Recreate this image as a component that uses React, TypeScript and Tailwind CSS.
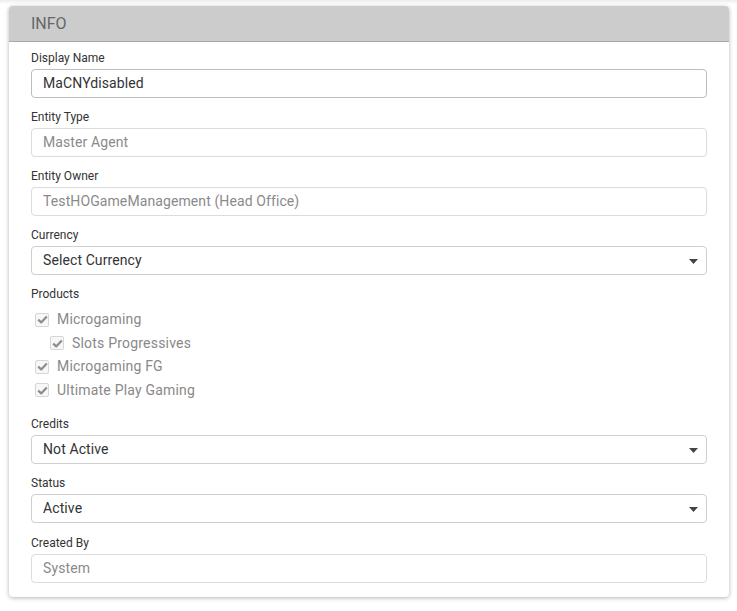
import React from "react";

function Label({ children }: { children: React.ReactNode }) {
  return <div className="h-4 text-[12px] leading-4 text-[#333] mb-[3px]">{children}</div>;
}

function TextBox({ value, disabled }: { value: string; disabled?: boolean }) {
  return (
    <div
      className={
        "h-[29px] rounded-[4px] border flex items-center pl-[11px] text-[14px] tracking-[0.1px] " +
        (disabled ? "border-[#dcdcdc] text-[#8a8a8a] bg-white" : "border-[#bdbdbd] text-[#333] bg-white")
      }
    >
      {value}
    </div>
  );
}

function SelectBox({ value }: { value: string }) {
  return (
    <div className="h-[29px] rounded-[4px] border border-[#cfcfcf] flex items-center justify-between pl-[11px] pr-[8px] text-[14px] tracking-[0.1px] text-[#333] bg-white">
      <span>{value}</span>
      <svg width="9" height="5" viewBox="0 0 9 5" className="mt-[2px]">
        <path d="M0 0 L9 0 L4.5 5 Z" fill="#444" />
      </svg>
    </div>
  );
}

function Field({ label, children, mb = "mb-[11px]" }: { label: string; children: React.ReactNode; mb?: string }) {
  return (
    <div className={mb}>
      <Label>{label}</Label>
      {children}
    </div>
  );
}

function Check({ label, indent }: { label: string; indent?: boolean }) {
  return (
    <div className={"h-[23.5px] flex items-center " + (indent ? "pl-[19px]" : "pl-[4px]")}>
      <div className="w-[14px] h-[14px] rounded-[2px] border border-[#d6d6d6] bg-[#f7f7f7] flex items-center justify-center mr-[8px]">
        <svg width="11" height="9" viewBox="0 0 11 9">
          <path d="M1.2 4.6 L4.2 7.4 L9.8 1.4" stroke="#8c8c8c" strokeWidth="2.2" fill="none" strokeLinejoin="round" />
        </svg>
      </div>
      <span className="text-[14px] tracking-[0.2px] text-[#8a8888]">{label}</span>
    </div>
  );
}

export default function App() {
  return (
    <div
      className="w-[737px] h-[611px] bg-white relative overflow-hidden"
      style={{ fontFamily: "Roboto, 'Noto Sans', Arial, sans-serif" }}
    >
      <div className="h-[4px] bg-gradient-to-b from-[#ececec] to-white" />
      <div className="ml-[9px] mt-[2px] w-[720px] rounded-[4px] bg-white shadow-[0_1px_4px_rgba(0,0,0,0.3)]">
        <div className="h-[36px] bg-[#cccccc] border-b border-[#a9a9a9] rounded-t-[4px] flex items-center pl-[22px] text-[16px] text-[#666]">
          INFO
        </div>
        <div className="px-[22px] pt-[8px] pb-[3px]">
          <Field label="Display Name">
            <TextBox value="MaCNYdisabled" />
          </Field>
          <Field label="Entity Type">
            <TextBox value="Master Agent" disabled />
          </Field>
          <Field label="Entity Owner">
            <TextBox value="TestHOGameManagement (Head Office)" disabled />
          </Field>
          <Field label="Currency">
            <SelectBox value="Select Currency" />
          </Field>
          <div className="mb-[14px]">
            <div className="h-4 text-[12px] leading-4 text-[#333] mb-[6px]">Products</div>
            <Check label="Microgaming" />
            <Check label="Slots Progressives" indent />
            <Check label="Microgaming FG" />
            <Check label="Ultimate Play Gaming" />
          </div>
          <Field label="Credits">
            <SelectBox value="Not Active" />
          </Field>
          <Field label="Status" mb="mb-[12px]">
            <SelectBox value="Active" />
          </Field>
          <Field label="Created By">
            <TextBox value="System" disabled />
          </Field>
        </div>
      </div>
    </div>
  );
}
